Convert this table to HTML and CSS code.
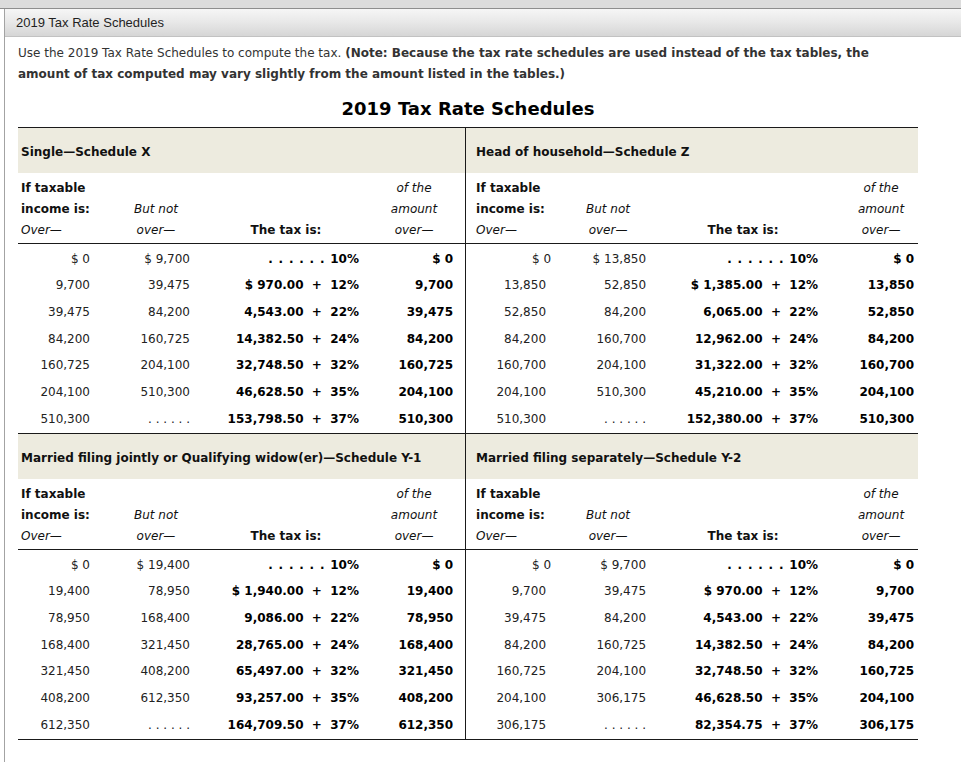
FILE: index.html
```html
<!DOCTYPE html>
<html lang="en">
<head>
<meta charset="utf-8">
<title>2019 Tax Rate Schedules</title>
<link rel="stylesheet" href="styles.css">
</head>
<body>
<div class="strip"></div>
<div class="panel">
  <div class="titlebar">2019 Tax Rate Schedules</div>
  <div class="content">
    <p class="intro">Use the 2019 Tax Rate Schedules to compute the tax. <b>(Note: Because the tax rate schedules are used instead of the tax tables, the amount of tax computed may vary slightly from the amount listed in the tables.)</b></p>
    <h1 class="heading">2019 Tax Rate Schedules</h1>
    <table class="sched">
      <colgroup>
        <col class="w-a"><col class="w-b"><col class="w-c"><col class="w-d">
        <col class="w-e"><col class="w-f"><col class="w-g"><col class="w-h">
      </colgroup>
      <tbody>
        <tr class="band first">
          <td colspan="4">Single—Schedule X</td>
          <td colspan="4" class="split">Head of household—Schedule Z</td>
        </tr>
        <tr class="head">
          <td><b>If taxable<br>income is:</b><br><i>Over—</i></td>
          <td><i>But not<br>over—</i></td>
          <td><b>The tax is:</b></td>
          <td><i>of the<br>amount<br>over—</i></td>
          <td><b>If taxable<br>income is:</b><br><i>Over—</i></td>
          <td><i>But not<br>over—</i></td>
          <td><b>The tax is:</b></td>
          <td><i>of the<br>amount<br>over—</i></td>
        </tr>
        <tr class="data"><td>$ 0</td><td>$ 9,700</td><td><span class="dots">. . . . . . </span>10%</td><td>$ 0</td><td class="zr">$ 0</td><td>$ 13,850</td><td><span class="dots">. . . . . . </span>10%</td><td>$ 0</td></tr>
        <tr class="data short"><td>9,700</td><td>39,475</td><td>$ 970.00&nbsp;&nbsp;+&nbsp;&nbsp;12%</td><td>9,700</td><td>13,850</td><td>52,850</td><td>$ 1,385.00&nbsp;&nbsp;+&nbsp;&nbsp;12%</td><td>13,850</td></tr>
        <tr class="data"><td>39,475</td><td>84,200</td><td>4,543.00&nbsp;&nbsp;+&nbsp;&nbsp;22%</td><td>39,475</td><td>52,850</td><td>84,200</td><td>6,065.00&nbsp;&nbsp;+&nbsp;&nbsp;22%</td><td>52,850</td></tr>
        <tr class="data"><td>84,200</td><td>160,725</td><td>14,382.50&nbsp;&nbsp;+&nbsp;&nbsp;24%</td><td>84,200</td><td>84,200</td><td>160,700</td><td>12,962.00&nbsp;&nbsp;+&nbsp;&nbsp;24%</td><td>84,200</td></tr>
        <tr class="data short"><td>160,725</td><td>204,100</td><td>32,748.50&nbsp;&nbsp;+&nbsp;&nbsp;32%</td><td>160,725</td><td>160,700</td><td>204,100</td><td>31,322.00&nbsp;&nbsp;+&nbsp;&nbsp;32%</td><td>160,700</td></tr>
        <tr class="data"><td>204,100</td><td>510,300</td><td>46,628.50&nbsp;&nbsp;+&nbsp;&nbsp;35%</td><td>204,100</td><td>204,100</td><td>510,300</td><td>45,210.00&nbsp;&nbsp;+&nbsp;&nbsp;35%</td><td>204,100</td></tr>
        <tr class="data last"><td>510,300</td><td>. . . . . .</td><td>153,798.50&nbsp;&nbsp;+&nbsp;&nbsp;37%</td><td>510,300</td><td>510,300</td><td>. . . . . .</td><td>152,380.00&nbsp;&nbsp;+&nbsp;&nbsp;37%</td><td>510,300</td></tr>

        <tr class="band">
          <td colspan="4">Married filing jointly or Qualifying widow(er)—Schedule Y-1</td>
          <td colspan="4" class="split">Married filing separately—Schedule Y-2</td>
        </tr>
        <tr class="head">
          <td><b>If taxable<br>income is:</b><br><i>Over—</i></td>
          <td><i>But not<br>over—</i></td>
          <td><b>The tax is:</b></td>
          <td><i>of the<br>amount<br>over—</i></td>
          <td><b>If taxable<br>income is:</b><br><i>Over—</i></td>
          <td><i>But not<br>over—</i></td>
          <td><b>The tax is:</b></td>
          <td><i>of the<br>amount<br>over—</i></td>
        </tr>
        <tr class="data"><td>$ 0</td><td>$ 19,400</td><td><span class="dots">. . . . . . </span>10%</td><td>$ 0</td><td class="zr">$ 0</td><td>$ 9,700</td><td><span class="dots">. . . . . . </span>10%</td><td>$ 0</td></tr>
        <tr class="data short"><td>19,400</td><td>78,950</td><td>$ 1,940.00&nbsp;&nbsp;+&nbsp;&nbsp;12%</td><td>19,400</td><td>9,700</td><td>39,475</td><td>$ 970.00&nbsp;&nbsp;+&nbsp;&nbsp;12%</td><td>9,700</td></tr>
        <tr class="data"><td>78,950</td><td>168,400</td><td>9,086.00&nbsp;&nbsp;+&nbsp;&nbsp;22%</td><td>78,950</td><td>39,475</td><td>84,200</td><td>4,543.00&nbsp;&nbsp;+&nbsp;&nbsp;22%</td><td>39,475</td></tr>
        <tr class="data"><td>168,400</td><td>321,450</td><td>28,765.00&nbsp;&nbsp;+&nbsp;&nbsp;24%</td><td>168,400</td><td>84,200</td><td>160,725</td><td>14,382.50&nbsp;&nbsp;+&nbsp;&nbsp;24%</td><td>84,200</td></tr>
        <tr class="data short"><td>321,450</td><td>408,200</td><td>65,497.00&nbsp;&nbsp;+&nbsp;&nbsp;32%</td><td>321,450</td><td>160,725</td><td>204,100</td><td>32,748.50&nbsp;&nbsp;+&nbsp;&nbsp;32%</td><td>160,725</td></tr>
        <tr class="data"><td>408,200</td><td>612,350</td><td>93,257.00&nbsp;&nbsp;+&nbsp;&nbsp;35%</td><td>408,200</td><td>204,100</td><td>306,175</td><td>46,628.50&nbsp;&nbsp;+&nbsp;&nbsp;35%</td><td>204,100</td></tr>
        <tr class="data last"><td>612,350</td><td>. . . . . .</td><td>164,709.50&nbsp;&nbsp;+&nbsp;&nbsp;37%</td><td>612,350</td><td>306,175</td><td>. . . . . .</td><td>82,354.75&nbsp;&nbsp;+&nbsp;&nbsp;37%</td><td>306,175</td></tr>
      </tbody>
    </table>
  </div>
</div>
</body>
</html>
```

FILE: styles.css
```css
html, body {
  margin: 0;
  padding: 0;
  background: #ffffff;
}

body {
  font-family: "DejaVu Sans", Verdana, sans-serif;
  font-size: 12px;
  color: #1a1a1a;
  min-height: 762px;
}

.strip {
  height: 8px;
  background: #dcdcdc;
  border-bottom: 1px solid #8e8e8e;
}

.panel {
  margin-left: 4px;
  border-left: 1px solid #a3a3a3;
  min-height: 753px;
}

.titlebar {
  height: 27px;
  line-height: 27px;
  padding-left: 11px;
  font-family: "Liberation Sans", Arial, sans-serif;
  font-size: 13px;
  color: #1f1f1f;
  background: linear-gradient(to bottom, #f6f6f6 0%, #e9e9e9 45%, #d6d6d6 100%);
  border-bottom: 1px solid #c2c2c2;
}

.content {
  padding: 6px 0 0 13px;
  width: 900px;
}

.intro {
  margin: 0;
  line-height: 21px;
  color: #333333;
}

.intro b {
  color: #333333;
}

.heading {
  margin: 12px 0 6px;
  font-size: 18px;
  line-height: 24px;
  font-weight: bold;
  text-align: center;
  color: #000000;
}

.sched {
  width: 900px;
  table-layout: fixed;
  border-collapse: separate;
  border-spacing: 0;
}

.w-a { width: 82px; }
.w-b { width: 100px; }
.w-c { width: 170px; }
.w-d { width: 95px; }
.w-e { width: 91px; }
.w-f { width: 100px; }
.w-g { width: 172px; }
.w-h { width: 90px; }

.sched td {
  padding: 0;
  white-space: nowrap;
}

.sched td:nth-child(5),
.sched td.split {
  border-left: 1px solid #1a1a1a;
}

/* section bands */
.band td {
  background: #edebdf;
  font-weight: bold;
  line-height: 21px;
  padding: 14px 0 10px 3px;
  color: #111111;
}

.band td.split {
  padding-left: 10px;
}

.band.first td {
  border-top: 1px solid #1a1a1a;
}

/* column heading rows */
.head td {
  vertical-align: bottom;
  line-height: 21px;
  padding-top: 5px;
  padding-bottom: 2px;
  border-bottom: 1px solid #1a1a1a;
  text-align: center;
  color: #111111;
}

.head td:nth-child(1) { text-align: left; padding-left: 3px; }
.head td:nth-child(2) { padding-left: 12px; }
.head td:nth-child(3) { padding-left: 2px; }
.head td:nth-child(4) { padding-right: 7px; }
.head td:nth-child(5) { text-align: left; padding-left: 10px; }
.head td:nth-child(6) { padding-left: 4px; }
.head td:nth-child(7) { padding-left: 2px; }
.head td:nth-child(8) { padding-left: 16px; }

/* data rows */
.data td {
  line-height: 24px;
  padding-top: 3px;
  text-align: right;
  color: #222222;
}

.data.short td {
  line-height: 23px;
}

.data td:nth-child(3),
.data td:nth-child(4),
.data td:nth-child(7),
.data td:nth-child(8) {
  font-weight: bold;
  color: #000000;
}

.data td:nth-child(1) { padding-right: 10px; }
.data td:nth-child(2) { padding-right: 10px; }
.data td:nth-child(3) { padding-right: 11px; }
.data td:nth-child(4) { padding-right: 12px; }
.data td:nth-child(5) { padding-right: 10px; }
.data td:nth-child(6) { padding-right: 10px; }
.data td:nth-child(7) { padding-right: 10px; }
.data td:nth-child(8) { padding-right: 4px; }

.data td.zr { padding-right: 5px; }

.dots {
  letter-spacing: 0.8px;
}

.data.last td {
  padding-bottom: 2px;
  border-bottom: 1px solid #1a1a1a;
}
```
